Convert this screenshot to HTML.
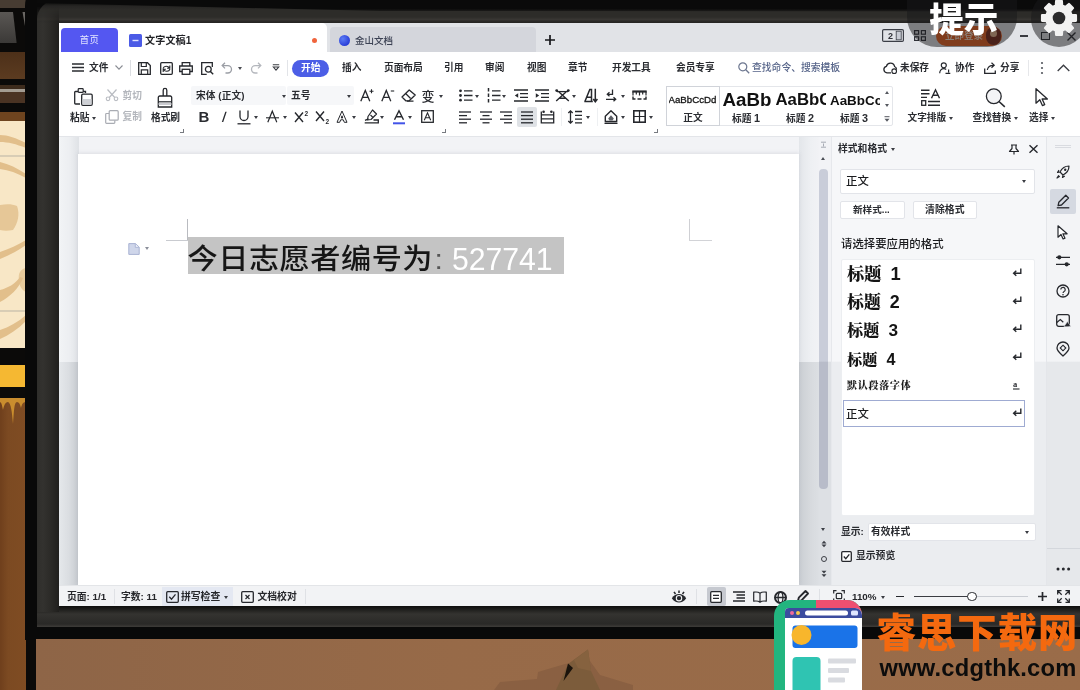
<!DOCTYPE html>
<html lang="zh-CN">
<head>
<meta charset="utf-8">
<title>文字文稿1</title>
<style>
*{box-sizing:border-box;margin:0;padding:0}
html,body{width:1080px;height:690px;overflow:hidden;background:#0b0a09}
body{font-family:"Liberation Sans","Noto Sans CJK SC",sans-serif;color:#1c1c1c;position:relative}
.abs{position:absolute}
#stage{position:absolute;left:0;top:0;width:1080px;height:690px;overflow:hidden;filter:blur(.55px)}
/* ---------- wallpaper on the left ---------- */
#wall{left:0;top:0;width:40px;height:690px;background:#0b0a09}
#wall div{position:absolute;left:0;width:26px}
/* ---------- monitor ---------- */
#bezelOuter{left:25px;top:-20px;width:1100px;height:660px;background:#090909;border-radius:26px 0 0 0}
#bezel{left:37px;top:0;width:1100px;height:627px;border-radius:20px 0 0 0;
  background:linear-gradient(180deg,#0b0b0a 0,#0f0f0e 2.500px,#262523 6px,#2d2c29 10px,#2d2c29 17px,#383633 19.500px,#262523 22px,#2c2b28 30px,#2c2b28 600px,#0e0e0d 606px,#343330 614px,#2a2927 624px,#3b3936 626.5px,#0a0a0a 627px)}
#desk{left:36px;top:639px;width:1044px;height:51px;background:#8f6647}
#screen{left:59px;top:23px;width:1021px;height:583px;background:#fff;overflow:hidden}
/* everything inside #screen is positioned in page coordinates via this shim */
#s{position:absolute;left:-59px;top:-23px;width:1080px;height:690px}
.t{position:absolute;white-space:nowrap;line-height:1}

/* ---------- tab bar ---------- */
#tabbar{left:59px;top:23px;width:1021px;height:29px;background:#e1e3e7}
#tabHome{left:61px;top:28px;width:57px;height:24px;background:#5457f1;border-radius:4px 4px 0 0;color:#e4e6ff;font-size:9.300px;text-align:center;line-height:25px;letter-spacing:.5px}
#tabDoc{left:59px;top:23px;width:268px;height:29px;background:#fff;border-radius:0 5px 0 0}
#tab2{left:330px;top:27px;width:206px;height:25px;background:#d4d6dc;border-radius:4px 4px 0 0}
.mi{font-size:9.700px;font-weight:700;color:#2a2c31;top:63px}
.ico{position:absolute;overflow:visible}
.ico *{vector-effect:none}

.rb{font-size:9.700px;font-weight:700;color:#2a2c31}
#ribbonLine{left:59px;top:136px;width:1021px;height:1px;background:#e3e5e9}
.launch{position:absolute;width:4px;height:4px;border-right:1.200px solid #777a80;border-bottom:1.200px solid #777a80}

#gal{left:666px;top:86px;width:227px;height:40px;border:1px solid #e4e6ea;border-radius:2px;background:#fff}
#galSel{left:666px;top:86px;width:54px;height:40px;border:1px solid #d0d3d9;background:#fff}
.gs{position:absolute;white-space:nowrap;overflow:hidden;font-family:"Liberation Sans","Noto Sans CJK SC",sans-serif;color:#111;line-height:1}

/* ---------- document area ---------- */
#docbg{left:59px;top:137px;width:772px;height:448px;background:linear-gradient(180deg,#f2f3f6 0,#f2f3f6 224px,#dde0e4 225.500px,#dde0e4 100%)}
#page{left:78px;top:154px;width:721px;height:431px;background:#fff;box-shadow:0 -1px 4px rgba(110,115,130,.16)}
#sel{left:188px;top:237px;width:376px;height:36.500px;background:#c4c4c4}
#doctext{left:187.500px;top:244.400px;transform:scaleY(.93);transform-origin:0 50%;font-size:30.200px;letter-spacing:.5px;color:#161616;font-family:"Liberation Sans","Noto Sans CJK SC",sans-serif;font-weight:500;line-height:32px}
#doctext .c{color:#555;margin-left:1.500px}
#doctext .n{color:#fff;margin-left:8.500px;letter-spacing:0;font-weight:400;display:inline-block;transform:scaleY(1.09);transform-origin:0 62%}
#vscroll{left:819px;top:137px;width:10px;height:448px}
#thumb{left:819px;top:169px;width:9px;height:320px;border-radius:4px;background:linear-gradient(180deg,#c9cdd9 0,#c9cdd9 192px,#b8bcc9 193.500px,#b8bcc9 100%)}

/* ---------- styles panel ---------- */
#panel{left:831px;top:137px;width:215px;height:448px;border-left:1px solid #e6e8ec;background:linear-gradient(180deg,#f6f7f9 0,#f6f7f9 224px,#ebedf0 225.500px,#ebedf0 100%)}
#tools{left:1046px;top:137px;width:34px;height:448px;border-left:1px solid #e4e6ea;background:linear-gradient(180deg,#f3f4f6 0,#f3f4f6 224px,#e6e8eb 225.500px,#e6e8eb 100%)}
.pbox{position:absolute;background:#fff;border:1px solid #e2e4e9;border-radius:2px}
.pt{font-size:9.800px;font-weight:700;color:#2a2c31}
.hd{position:absolute;white-space:nowrap;line-height:1;left:847px;font-family:"Liberation Serif","Noto Serif CJK SC",serif;font-weight:900;color:#141414}
.hd b{font-family:"Liberation Sans",sans-serif;font-weight:700;margin-left:9px;font-size:1.060em}

/* ---------- status bar ---------- */
#status{left:59px;top:585px;width:1021px;height:22px;background:#f2f3f5;border-top:1px solid #e3e5e8}
.st{font-size:9.800px;font-weight:700;color:#26272b}

/* ---------- overlay (hint / settings / watermark) ---------- */
#hint{left:907px;top:-40px;width:110px;height:86.500px;border-radius:30px;background:rgba(24,24,26,.5)}
#hintT{left:929.300px;top:2.500px;font-size:34.500px;font-weight:900;color:#fff;font-family:"Liberation Sans","Noto Sans CJK SC",sans-serif;letter-spacing:0}
#gearBg{left:1031px;top:-10px;width:56px;height:56.500px;border-radius:50%;background:rgba(24,24,26,.5)}
#wmT{left:876.500px;top:614px;letter-spacing:1.100px;font-size:39.300px;font-weight:900;color:#f4690f;font-family:"Liberation Sans","Noto Sans CJK SC",sans-serif;line-height:1}
#wmU{left:879.500px;top:656.500px;letter-spacing:.220px;font-size:23.700px;font-weight:700;color:#0c0c0c;font-family:"Liberation Sans",sans-serif;line-height:1}

.gut{position:absolute;top:137px;height:448px}
#gutL1{left:59px;width:19.500px;top:137px;height:224.500px;background:linear-gradient(90deg,#f2f4f6 0,#eceef1 55%,#dfe2e6 100%)}
#gutL2{left:59px;width:19.500px;top:361.500px;height:223.500px;background:linear-gradient(90deg,#e5e8eb 0,#dadde1 50%,#c5c9ce 100%)}
#gutR1{left:799px;width:20px;top:137px;height:224.500px;background:linear-gradient(90deg,#e3e6ea 0,#eef0f3 60%,#f1f2f5 100%)}
#gutR2{left:799px;width:20px;top:361.500px;height:223.500px;background:linear-gradient(90deg,#caced3 0,#d7dade 60%,#dcdfe3 100%)}

#bezelL{left:37px;top:6px;width:22px;height:606px;-webkit-mask-image:linear-gradient(180deg,transparent 0,#000 18px);mask-image:linear-gradient(180deg,transparent 0,#000 18px);background:linear-gradient(90deg,#2f2e2b 0,#33322f 6px,#2b2a27 14px,#201f1d 22px)}

#bezelTop{left:37px;top:0;width:1043px;height:12px;background:linear-gradient(180deg,#0a0a0a 0,#0a0a0a 72%,rgba(10,10,10,.3) 100%);clip-path:polygon(0 0,100% 0,100% 11.500px,343px 11px,40px 4px,0 3px)}
</style>
</head>
<body>
<div id="stage">
<div id="wall" class="abs">
  <div style="top:0;height:9px;background:#473c32"></div>
  <div style="top:8px;height:4px;background:#0b0a09"></div>
  <div style="top:12px;height:31px;background:linear-gradient(180deg,#5a5754,#3b3937)"></div>
  <svg style="position:absolute;left:0;top:0" width="38" height="46" viewBox="0 0 38 46"><path d="M13 12h25v34H17z" fill="#0b0a09"/><path d="M22.500 12h3l-.5 14z" fill="#6a6763"/><path d="M28 0h10v12H26z" fill="#0b0a09"/></svg>
  <div style="top:43px;height:9px;background:#0b0a09"></div>
  <div style="top:52px;height:27px;background:linear-gradient(180deg,#4d3019,#5b3b20)"></div>
  <div style="top:79px;height:6px;background:#0b0a09"></div>
  <div style="top:85px;height:4px;background:#3d2b1c"></div>
  <div style="top:89px;height:3px;background:#a39c92"></div>
  <div style="top:92px;height:11px;background:#4a3323"></div>
  <div style="top:103px;height:9px;background:#0b0a09"></div>
  <div style="top:112px;height:236px;background:#f8e7c6"></div>
  <svg style="position:absolute;left:0;top:112px" width="26" height="236" viewBox="0 112 26 236">
   <rect x="0" y="112" width="26" height="9" fill="#6e441f"/>
   <g fill="#e2bf8b">
    <path d="M0 135c8 0 16 3 26 8v5c-10-4-18-6-26-6z"/>
    <path d="M0 162c9 2 17 6 26 12v4c-9-5-17-8-26-9z"/>
    <path d="M0 205c7-1 12-1 17 1 3 8 1 17-4 24-5 1-9 1-13 0z" fill="#e6c797"/>
    <path d="M0 252c9-3 18-7 26-12v5c-8 6-17 10-26 14z"/>
    <path d="M26 268c-6 1-8 6-7 12 0 6 3 10 7 12z" fill="#e8cb9c"/>
    <path d="M0 290c8-2 15-6 20-13l3 1c-4 10-13 19-23 24z"/>
    <path d="M0 330c9-3 18-8 26-15v6c-8 8-17 14-26 18z"/>
   </g>
   <path d="M0 156h26M0 311h26" stroke="#b9b3a4" stroke-width="1"/>
  </svg>
  <div style="top:348px;height:17px;background:#0b0a09"></div>
  <div style="top:365px;height:22px;background:#f5b832"></div>
  <div style="top:387px;height:11px;background:#0b0a09"></div>
  <div style="top:398px;height:292px;background:linear-gradient(90deg,#6f3f1c 0,#7c4a22 8px,#7f4c23 100%)"></div>
  <svg style="position:absolute;left:0;top:398px" width="26" height="40" viewBox="0 0 26 40"><path d="M0 0h26v4c-3 0-4 2-5 6-1-4-2-6-4-6-3 0-3 10-4 22C12 14 11 5 8 4 5 4 4 8 3 12 2 8 2 5 0 4z" fill="#c98d2e"/></svg>
</div>
<div id="bezelOuter" class="abs"></div>
<div id="bezel" class="abs"></div>
<div id="bezelL" class="abs"></div>
<div id="bezelTop" class="abs"></div>
<div id="desk" class="abs"></div>
<svg class="ico" style="left:36px;top:639px" width="1044" height="51" viewBox="36 639 1044 51">
<defs><linearGradient id="dg" x1="0" x2="1" y1="0" y2="0"><stop offset="0" stop-color="#8e6547"/><stop offset=".4" stop-color="#976a48"/><stop offset="1" stop-color="#9a6c49"/></linearGradient></defs>
<rect x="36" y="639" width="1044" height="51" fill="url(#dg)"/>
<path d="M494 690l6-8 37-3 1-7 27-8 25-3 10 14 33 10v5z" fill="#8a6042"/>
<path d="M588 649.500L568 664l-12 26h44l-9-19z" fill="#7c5c3b"/>
<path d="M588 649.500l-14 10.500 4 8 13 3z" fill="#86623f"/>
<path d="M568 663.500l5 4.500-9.500 13z" fill="#1a130c"/>
</svg>


<div id="screen" class="abs"><div id="s">

<div id="tabbar" class="abs"></div>
<div id="tabDoc" class="abs"></div>
<div id="tabHome" class="abs">首页</div>
<div id="tab2" class="abs"></div>
<svg class="ico" style="left:129px;top:34px" width="13" height="13" viewBox="0 0 13 13"><rect width="13" height="13" rx="1.5" fill="#4b5be6"/><path d="M3.5 6.5h6" stroke="#dfe3ff" stroke-width="1.4"/></svg>
<div class="t" style="left:145px;top:36px;font-size:10.100px;font-weight:700;color:#222327;letter-spacing:.1px">文字文稿1</div>
<div class="abs" style="left:312px;top:38px;width:5px;height:5px;border-radius:50%;background:#f0643c"></div>
<div class="abs" style="left:339px;top:35px;width:11px;height:11px;border-radius:50%;background:radial-gradient(circle at 35% 35%,#5b7cf5,#2a3fd8 70%)"></div>
<div class="t" style="left:355px;top:36px;font-size:9.5px;color:#3c4254;font-weight:500">金山文档</div>
<svg class="ico" style="left:545px;top:35px" width="10" height="10" viewBox="0 0 10 10"><path d="M5 0v10M0 5h10" stroke="#17181b" stroke-width="1.7"/></svg>
<!-- window buttons -->
<svg class="ico" style="left:882px;top:29px" width="22" height="13" viewBox="0 0 22 13"><rect x=".6" y=".6" width="20.8" height="11.8" rx="1.2" fill="none" stroke="#3b3e46" stroke-width="1.2"/><rect x="14.2" y="2.2" width="5" height="8.6" fill="#c9ccd4" stroke="#3b3e46" stroke-width=".8"/><text x="6" y="10" font-size="9" font-family="Liberation Sans,sans-serif" fill="#2f3138" font-weight="bold">2</text></svg>
<svg class="ico" style="left:914px;top:30px" width="12" height="11" viewBox="0 0 12 11"><g fill="none" stroke="#2f3138" stroke-width="1.2"><rect x=".6" y=".6" width="4" height="3.6"/><rect x="7.4" y=".6" width="4" height="3.6"/><rect x=".6" y="6.8" width="4" height="3.6"/><rect x="7.4" y="6.8" width="4" height="3.6"/></g></svg>
<div class="abs" style="left:936px;top:26px;width:66px;height:20px;border-radius:10px;background:#e8601f"></div>
<div class="t" style="left:945px;top:31px;font-size:9.5px;color:#ffe9d6;font-weight:500">立即登录</div>
<div class="abs" style="left:986px;top:27px;width:15px;height:18px;border-radius:8px;background:#7a2a1a"></div>
<div class="abs" style="left:990px;top:30px;width:7px;height:7px;border-radius:50%;background:#e9b48c"></div>
<div class="abs" style="left:1020px;top:35px;width:8px;height:1.6px;background:#3a3c42"></div>
<div class="abs" style="left:1041px;top:32px;width:9px;height:8px;border:1.4px solid #2d2f35"></div>
<svg class="ico" style="left:1067px;top:32px" width="9" height="9" viewBox="0 0 9 9"><path d="M.5.5l8 8M8.5.5l-8 8" stroke="#2d2f35" stroke-width="1.4"/></svg>


<!-- hamburger -->
<svg class="ico" style="left:72px;top:63px" width="12" height="9" viewBox="0 0 12 9"><path d="M0 1h12M0 4.5h12M0 8h12" stroke="#2a2c31" stroke-width="1.3"/></svg>
<div class="t mi" style="left:89px;top:63px;">文件</div>
<svg class="ico" style="left:115px;top:65px" width="8" height="5" viewBox="0 0 8 5"><path d="M.5.5l3.5 3.7L7.500.5" fill="none" stroke="#8a8d94" stroke-width="1.1"/></svg>
<div class="abs" style="left:130px;top:60px;width:1px;height:16px;background:#dcdee2"></div>
<!-- save -->
<svg class="ico" style="left:138px;top:62px" width="13" height="13" viewBox="0 0 13 13"><path d="M.7.7h8.8l2.800 2.800v8.800H.7z" fill="none" stroke="#26282d" stroke-width="1.3"/><path d="M3.300.8v3.700h5V.8M3.300 12.200V7.800h6.400v4.400" fill="none" stroke="#26282d" stroke-width="1.200"/></svg>
<!-- save as / export -->
<svg class="ico" style="left:160px;top:62px" width="13" height="13" viewBox="0 0 13 13"><rect x=".7" y=".7" width="11.600" height="11.600" rx="1" fill="none" stroke="#26282d" stroke-width="1.3"/><path d="M3 6.500c1-3 5-3 6.500-.5M9.800 3.500v2.700H7.100M10 7c-1 3-5 3-6.500.5M3.200 10V7.300h2.700" fill="none" stroke="#26282d" stroke-width="1.100"/></svg>
<!-- print -->
<svg class="ico" style="left:179px;top:62px" width="14" height="13" viewBox="0 0 14 13"><path d="M3.200 4V.7h7.600V4M3.200 9.500H.7V4h12.600v5.500h-2.500" fill="none" stroke="#26282d" stroke-width="1.300"/><rect x="3.200" y="7.300" width="7.600" height="5" fill="#fff" stroke="#26282d" stroke-width="1.300"/></svg>
<!-- preview -->
<svg class="ico" style="left:201px;top:62px" width="13" height="13" viewBox="0 0 13 13"><path d="M11.300 5V.7H.7v11.600h5" fill="none" stroke="#26282d" stroke-width="1.300"/><circle cx="7.300" cy="7.300" r="2.900" fill="none" stroke="#26282d" stroke-width="1.300"/><path d="M9.400 9.400l2.800 2.800" stroke="#26282d" stroke-width="1.400"/></svg>
<!-- undo / redo -->
<svg class="ico" style="left:221px;top:62px" width="12" height="12" viewBox="0 0 12 12"><path d="M4 .8L1.200 3.600 4 6.400M1.500 3.600h5.300a3.700 3.700 0 010 7.400H4.500" fill="none" stroke="#9b9ea5" stroke-width="1.3"/></svg>
<div class="abs" style="left:238px;top:67px;border:2.5px solid transparent;border-top:3px solid #4a4c52"></div>
<svg class="ico" style="left:250px;top:62px" width="12" height="12" viewBox="0 0 12 12"><path d="M8 .8l2.800 2.800L8 6.400M10.500 3.600H5.200a3.700 3.700 0 000 7.400h2.300" fill="none" stroke="#b4b7bd" stroke-width="1.3"/></svg>
<svg class="ico" style="left:272px;top:64px" width="8" height="8" viewBox="0 0 8 8"><path d="M.8.800h6.400M1.300 3l2.700 3.200L6.700 3z" fill="none" stroke="#3a3c42" stroke-width="1.100"/></svg>
<div class="abs" style="left:287px;top:60px;width:1px;height:16px;background:#e2e4e8"></div>
<div class="abs" style="left:292px;top:60px;width:37px;height:17px;border-radius:9px;background:#4c5ee6"></div>
<div class="t mi" style="left:301px;top:63px;color:#fff;font-weight:700">开始</div>
<div class="t mi" style="left:342px;top:63px;">插入</div>
<div class="t mi" style="left:384px;top:63px;">页面布局</div>
<div class="t mi" style="left:444px;top:63px;">引用</div>
<div class="t mi" style="left:485px;top:63px;">审阅</div>
<div class="t mi" style="left:527px;top:63px;">视图</div>
<div class="t mi" style="left:568px;top:63px;">章节</div>
<div class="t mi" style="left:612px;top:63px;">开发工具</div>
<div class="t mi" style="left:676px;top:63px;">会员专享</div>
<svg class="ico" style="left:738px;top:62px" width="12" height="12" viewBox="0 0 12 12"><circle cx="4.800" cy="4.800" r="4" fill="none" stroke="#6d7790" stroke-width="1.200"/><path d="M7.800 7.800l3.400 3.400" stroke="#6d7790" stroke-width="1.300"/></svg>
<div class="t mi" style="left:752px;top:63px;color:#566489;font-weight:500;font-size:9.800px">查找命令、搜索模板</div>
<svg class="ico" style="left:883px;top:62px" width="15" height="12" viewBox="0 0 15 12"><path d="M8 10.800H4a3.300 3.300 0 01-.6-6.500 4.200 4.200 0 018.200.2 3 3 0 011.900 3" fill="none" stroke="#26282d" stroke-width="1.300"/><circle cx="11.200" cy="9.200" r="2.300" fill="none" stroke="#26282d" stroke-width="1.100"/></svg>
<div class="t mi" style="left:900px;top:63px;">未保存</div>
<svg class="ico" style="left:939px;top:62px" width="12" height="12" viewBox="0 0 12 12"><circle cx="4.800" cy="3.300" r="2.500" fill="none" stroke="#26282d" stroke-width="1.200"/><path d="M.7 11.300c0-3 1.800-4.600 4.100-4.600 1 0 1.800.3 2.400.8M6.500 11.300h4.800M9.600 7.500v3" fill="none" stroke="#26282d" stroke-width="1.200"/></svg>
<div class="t mi" style="left:955px;top:63px;">协作</div>
<svg class="ico" style="left:984px;top:62px" width="13" height="12" viewBox="0 0 13 12"><path d="M.7 6.500v4.800h10.600V8.500" fill="none" stroke="#26282d" stroke-width="1.300"/><path d="M3.300 8c.5-3 3-4.700 6.200-4.700M7.500.8l2.700 2.500-2.700 2.500" fill="none" stroke="#26282d" stroke-width="1.200"/></svg>
<div class="t mi" style="left:1000px;top:63px;">分享</div>
<div class="abs" style="left:1028px;top:60px;width:1px;height:16px;background:#e6e7ea"></div>
<svg class="ico" style="left:1040px;top:61px" width="4" height="14" viewBox="0 0 4 14"><circle cx="2" cy="2" r="1.100" fill="#55585f"/><circle cx="2" cy="7" r="1.100" fill="#55585f"/><circle cx="2" cy="12" r="1.100" fill="#55585f"/></svg>
<svg class="ico" style="left:1057px;top:64px" width="13" height="8" viewBox="0 0 13 8"><path d="M.7 7L6.500 1.200 12.300 7" fill="none" stroke="#3a3c42" stroke-width="1.300"/></svg>

<svg class="ico" style="left:74px;top:88px" width="19" height="18" viewBox="0 0 19 18"><path d="M9 3.500H11.500V5M4.500 3.500H1.500a.8.800 0 00-.8.800V15.200a.8.800 0 00.8.800H6" fill="none" stroke="#26282d" stroke-width="1.300"/><rect x="4.200" y=".7" width="5" height="3.600" rx=".8" fill="#fff" stroke="#26282d" stroke-width="1.200"/><rect x="7.700" y="6.200" width="10.500" height="11.100" rx="1.200" fill="#fff" stroke="#26282d" stroke-width="1.300"/><rect x="8.500" y="11" width="9" height="5.600" fill="#cfd1d6"/></svg>
<div class="t rb" style="left:70px;top:113px;">粘贴</div>
<div class="abs" style="left:92.0px;top:116.8px;border:2.5px solid transparent;border-top:3px solid #3a3c42;border-bottom:0"></div>
<svg class="ico" style="left:105px;top:89px" width="14" height="12" viewBox="0 0 14 12"><path d="M2.500.5l7.200 8M11.500.5l-7.200 8" stroke="#b9bcc2" stroke-width="1.200" fill="none"/><circle cx="3" cy="9.800" r="1.800" fill="none" stroke="#b9bcc2" stroke-width="1.100"/><circle cx="11" cy="9.800" r="1.800" fill="none" stroke="#b9bcc2" stroke-width="1.100"/></svg>
<div class="t rb" style="left:122.5px;top:90.5px;color:#b3b6bc">剪切</div>
<svg class="ico" style="left:105px;top:110px" width="14" height="14" viewBox="0 0 14 14"><rect x="4.200" y=".7" width="9" height="9.500" rx="1" fill="none" stroke="#a9acb3" stroke-width="1.200"/><path d="M4 3.500H1.500a.8.800 0 00-.8.800v8.200a.8.800 0 00.8.800H9a.8.800 0 00.8-.8V10.500" fill="none" stroke="#a9acb3" stroke-width="1.200"/></svg>
<div class="t rb" style="left:122.5px;top:112px;color:#b3b6bc">复制</div>
<svg class="ico" style="left:157px;top:88px" width="16" height="20" viewBox="0 0 16 20"><path d="M6.200 8V2.200a1.800 1.800 0 013.600 0V8M2.800 8h10.400a1.500 1.500 0 011.500 1.500V19H1.300V9.500A1.500 1.500 0 012.800 8z" fill="none" stroke="#26282d" stroke-width="1.300"/><path d="M1.500 13.800h13" stroke="#26282d" stroke-width="1.200"/><path d="M1.500 16h13" stroke="#c4c6cb" stroke-width="1.800"/></svg>
<div class="t rb" style="left:151px;top:113px;">格式刷</div>
<div class="launch" style="left:180px;top:129px"></div>
<div class="abs" style="left:191px;top:86px;width:95px;height:19px;background:#f6f7f9;border-radius:2px"></div>
<div class="abs" style="left:287px;top:86px;width:67px;height:19px;background:#f6f7f9;border-radius:2px"></div>
<div class="t rb" style="left:196px;top:91px;letter-spacing:.1px">宋体 (正文)</div>
<div class="abs" style="left:281.5px;top:94.8px;border:2.5px solid transparent;border-top:3px solid #3a3c42;border-bottom:0"></div>
<div class="t rb" style="left:291px;top:91px;">五号</div>
<div class="abs" style="left:346.5px;top:94.8px;border:2.5px solid transparent;border-top:3px solid #3a3c42;border-bottom:0"></div>
<svg class="ico" style="left:360px;top:89px" width="14" height="13" viewBox="0 0 14 13"><path d="M.8 12.300L5.300 1.500 9.800 12.300M2.600 8.300h5.400" fill="none" stroke="#26282d" stroke-width="1.300"/><path d="M11.500.3v4M9.500 2.300h4" stroke="#26282d" stroke-width="1.100"/></svg>
<svg class="ico" style="left:381px;top:89px" width="14" height="13" viewBox="0 0 14 13"><path d="M.8 12.300L5.300 1.500 9.800 12.300M2.600 8.300h5.400" fill="none" stroke="#26282d" stroke-width="1.300"/><path d="M9.800 2h3.400" stroke="#26282d" stroke-width="1.100"/></svg>
<svg class="ico" style="left:401px;top:89px" width="15" height="13" viewBox="0 0 15 13"><path d="M8.200 1L1 8l3.800 3.800h3.400L14.200 6z" fill="none" stroke="#26282d" stroke-width="1.300" stroke-linejoin="round"/><path d="M4.600 4.500l5 5M6 12.200h6.500" stroke="#26282d" stroke-width="1.200" fill="none"/></svg>
<div class="t rb" style="left:421.5px;top:90px;font-size:13px;font-weight:500">变</div>
<div class="abs" style="left:438.5px;top:94.8px;border:2.5px solid transparent;border-top:3px solid #3a3c42;border-bottom:0"></div>
<svg class="ico" style="left:459px;top:89px" width="14" height="13" viewBox="0 0 14 13"><g fill="#26282d"><circle cx="1.500" cy="1.800" r="1.400"/><circle cx="1.500" cy="6.500" r="1.400"/><circle cx="1.500" cy="11.200" r="1.400"/></g><path d="M5 1.800h8.500M5 6.500h8.500M5 11.200h8.500" stroke="#26282d" stroke-width="1.300"/></svg>
<div class="abs" style="left:474.5px;top:94.8px;border:2.5px solid transparent;border-top:3px solid #3a3c42;border-bottom:0"></div>
<svg class="ico" style="left:487px;top:88px" width="14" height="15" viewBox="0 0 14 15"><path d="M1.500 0v15" stroke="#26282d" stroke-width="1.500" stroke-dasharray="3.500 2"/><path d="M5 2.800h8.500M5 7.500h8.500M5 12.200h8.500" stroke="#26282d" stroke-width="1.300"/></svg>
<div class="abs" style="left:502.0px;top:94.8px;border:2.5px solid transparent;border-top:3px solid #3a3c42;border-bottom:0"></div>
<svg class="ico" style="left:514px;top:89px" width="14" height="13" viewBox="0 0 14 13"><path d="M0 1h14M6 4.700h8M6 8.300h8M0 12h14" stroke="#26282d" stroke-width="1.300"/><path d="M4.200 4.200v4.600L.8 6.500z" fill="#26282d"/></svg>
<svg class="ico" style="left:535px;top:89px" width="14" height="13" viewBox="0 0 14 13"><path d="M0 1h14M6 4.700h8M6 8.300h8M0 12h14" stroke="#26282d" stroke-width="1.300"/><path d="M.8 4.200v4.600l3.400-2.300z" fill="#26282d"/></svg>
<svg class="ico" style="left:555px;top:88px" width="15" height="14" viewBox="0 0 15 14"><path d="M2 3.600h11" stroke="#26282d" stroke-width="1.300"/><path d="M4 4l9.800 9M11 4L1.200 13M4.500 10.300h6" stroke="#26282d" stroke-width="1.400" fill="none"/><circle cx="1.700" cy="2.600" r="1.400" fill="#26282d"/><circle cx="13.300" cy="2.600" r="1.400" fill="#26282d"/></svg>
<div class="abs" style="left:572.0px;top:94.8px;border:2.5px solid transparent;border-top:3px solid #3a3c42;border-bottom:0"></div>
<svg class="ico" style="left:584px;top:88px" width="14" height="15" viewBox="0 0 14 15"><path d="M1 13.300L5.800 1.500l1.700 0v11.800M2.800 9.300h4.500M.3 13.500h8.500" fill="none" stroke="#26282d" stroke-width="1.500"/><path d="M11.300.800v12.600M9.200 11l2.100 2.800 2.100-2.800" fill="none" stroke="#26282d" stroke-width="1.500"/></svg>
<svg class="ico" style="left:605px;top:89px" width="13" height="13" viewBox="0 0 13 13"><path d="M7.500.5v4.800H2.500M4.500 3.300L2.300 5.300l2.200 2M1 10.300h9.500M8.500 8.300l2.200 2-2.200 2" fill="none" stroke="#26282d" stroke-width="1.300"/></svg>
<div class="abs" style="left:620.5px;top:94.8px;border:2.5px solid transparent;border-top:3px solid #3a3c42;border-bottom:0"></div>
<svg class="ico" style="left:632px;top:90px" width="15" height="11" viewBox="0 0 15 11"><path d="M.3 1.500h14.400" stroke="#26282d" stroke-width="2.200"/><path d="M1 1.500v4M4.300 1.500v3M7.500 1.500v4M10.700 1.500v3M14 1.500v4" stroke="#26282d" stroke-width="1.200"/><path d="M1 6.500v2.500h2.500M14 6.500v2.500h-2.500M5.500 9h4" stroke="#26282d" stroke-width="1.400" fill="none"/></svg>
<div class="t rb" style="left:198.5px;top:109px;font-size:15px;font-weight:700;font-family:Liberation Sans,sans-serif">B</div>
<div class="t rb" style="left:221.5px;top:109px;font-size:15px;font-style:italic;font-weight:400;font-family:Liberation Sans,sans-serif;transform:skewX(-8deg)">I</div>
<svg class="ico" style="left:237px;top:110px" width="14" height="15" viewBox="0 0 14 15"><path d="M3 .5v6a4 4 0 008 0v-6" fill="none" stroke="#26282d" stroke-width="1.300"/><path d="M.5 13.800h13" stroke="#26282d" stroke-width="1.300"/></svg>
<div class="abs" style="left:254.0px;top:115.8px;border:2.5px solid transparent;border-top:3px solid #3a3c42;border-bottom:0"></div>
<svg class="ico" style="left:266px;top:110px" width="13" height="13" viewBox="0 0 13 13"><path d="M1.800 12.300L6.300 1.200l4.500 11.100" fill="none" stroke="#26282d" stroke-width="1.200"/><path d="M0 7.800h13" stroke="#26282d" stroke-width="1.100"/></svg>
<div class="abs" style="left:282.5px;top:115.8px;border:2.5px solid transparent;border-top:3px solid #3a3c42;border-bottom:0"></div>
<svg class="ico" style="left:294px;top:110px" width="15" height="13" viewBox="0 0 15 13"><path d="M1 2.500l8 9.500M9 2.500l-8 9.500" stroke="#26282d" stroke-width="1.400"/><text x="10.500" y="6" font-size="6.500" font-weight="bold" font-family="Liberation Sans,sans-serif" fill="#26282d">2</text></svg>
<svg class="ico" style="left:315px;top:110px" width="15" height="14" viewBox="0 0 15 14"><path d="M1 1.500l8 9.500M9 1.500l-8 9.500" stroke="#26282d" stroke-width="1.400"/><text x="10.500" y="13.500" font-size="6.500" font-weight="bold" font-family="Liberation Sans,sans-serif" fill="#26282d">2</text></svg>
<svg class="ico" style="left:336px;top:110px" width="12" height="13" viewBox="0 0 12 13"><path d="M1 12.300L6 1l5 11.300H8.300L7.300 9.800H4.700l-1 2.500zM5.300 8h1.400L6 5.800z" fill="#fff" stroke="#26282d" stroke-width="1" stroke-linejoin="round"/></svg>
<div class="abs" style="left:351.5px;top:115.8px;border:2.5px solid transparent;border-top:3px solid #3a3c42;border-bottom:0"></div>
<svg class="ico" style="left:364px;top:109px" width="15" height="15" viewBox="0 0 15 15"><path d="M8.500 1l4 4-5.500 5.500-3.500.5.500-3.500z" fill="none" stroke="#26282d" stroke-width="1.200" stroke-linejoin="round"/><path d="M6.500 6l2.500 2.500" stroke="#26282d" stroke-width="1.100"/><path d="M1 11.300l3.500-1.500M.7 13.800h13.600V11H9.500" fill="none" stroke="#26282d" stroke-width="1.300"/></svg>
<div class="abs" style="left:379.5px;top:115.8px;border:2.5px solid transparent;border-top:3px solid #3a3c42;border-bottom:0"></div>
<svg class="ico" style="left:393px;top:110px" width="12" height="15" viewBox="0 0 12 15"><path d="M1.500 9.800L6 .8l4.500 9M3 6.800h6" fill="none" stroke="#26282d" stroke-width="1.400"/><path d="M0 13.300h12" stroke="#4253e8" stroke-width="2"/></svg>
<div class="abs" style="left:408.0px;top:115.8px;border:2.5px solid transparent;border-top:3px solid #3a3c42;border-bottom:0"></div>
<svg class="ico" style="left:420.5px;top:110px" width="13" height="13" viewBox="0 0 13 13"><rect x=".7" y=".7" width="11.600" height="11.600" fill="none" stroke="#26282d" stroke-width="1.300"/><path d="M3.300 10.300L6.500 2.800l3.200 7.500M4.400 7.800h4.200" fill="none" stroke="#26282d" stroke-width="1.100"/></svg>
<svg class="ico" style="left:459px;top:111px" width="13" height="13" viewBox="0 0 13 13"><path d="M0 1.0h12" stroke="#26282d" stroke-width="1.300"/><path d="M0 4.6h8" stroke="#26282d" stroke-width="1.300"/><path d="M0 8.2h12" stroke="#26282d" stroke-width="1.300"/><path d="M0 11.8h8" stroke="#26282d" stroke-width="1.300"/></svg>
<svg class="ico" style="left:480px;top:111px" width="13" height="13" viewBox="0 0 13 13"><path d="M0 1.0h12" stroke="#26282d" stroke-width="1.300"/><path d="M2.5 4.6h7" stroke="#26282d" stroke-width="1.300"/><path d="M0 8.2h12" stroke="#26282d" stroke-width="1.300"/><path d="M2.5 11.8h7" stroke="#26282d" stroke-width="1.300"/></svg>
<svg class="ico" style="left:500px;top:111px" width="13" height="13" viewBox="0 0 13 13"><path d="M0 1.0h12" stroke="#26282d" stroke-width="1.300"/><path d="M4 4.6h8" stroke="#26282d" stroke-width="1.300"/><path d="M0 8.2h12" stroke="#26282d" stroke-width="1.300"/><path d="M4 11.8h8" stroke="#26282d" stroke-width="1.300"/></svg>
<div class="abs" style="left:517px;top:107px;width:20px;height:20px;background:#dfe2e6;border-radius:2px"></div>
<svg class="ico" style="left:521px;top:111px" width="13" height="13" viewBox="0 0 13 13"><path d="M0 1.0h12" stroke="#26282d" stroke-width="1.300"/><path d="M0 4.6h12" stroke="#26282d" stroke-width="1.300"/><path d="M0 8.2h12" stroke="#26282d" stroke-width="1.300"/><path d="M0 11.8h12" stroke="#26282d" stroke-width="1.300"/></svg>
<svg class="ico" style="left:540px;top:110px" width="15" height="14" viewBox="0 0 15 14"><path d="M1.300 1.500v12M13.700 1.500v12M1.300 4.800h12.400M1.300 8.800h12.400M1.300 12.800h12.400" fill="none" stroke="#26282d" stroke-width="1.300"/><circle cx="3.600" cy="1.800" r="1.300" fill="#26282d"/><circle cx="11.400" cy="1.800" r="1.300" fill="#26282d"/></svg>
<div class="abs" style="left:561px;top:108px;width:1px;height:18px;background:#eef0f2"></div>
<svg class="ico" style="left:568px;top:110px" width="14" height="14" viewBox="0 0 14 14"><path d="M2.500.8v12.400M.3 3L2.500.8 4.700 3M.3 11l2.200 2.200L4.700 11" fill="none" stroke="#26282d" stroke-width="1.300"/><path d="M7 1.500h7M7 5.300h7M7 9.100h7M7 12.900h7" stroke="#26282d" stroke-width="1.300"/></svg>
<div class="abs" style="left:586.0px;top:115.8px;border:2.5px solid transparent;border-top:3px solid #3a3c42;border-bottom:0"></div>
<div class="abs" style="left:597px;top:108px;width:1px;height:18px;background:#eef0f2"></div>
<svg class="ico" style="left:604px;top:110px" width="14" height="14" viewBox="0 0 14 14"><path d="M7 .800l5.700 5.400v5.300H1.300V6.200z" fill="none" stroke="#26282d" stroke-width="1.400" stroke-linejoin="round"/><path d="M4.200 8.500l2.800-3.300 2.800 3.300-1.300 2H5.500z" fill="#5a5d64"/><path d="M.5 13.300h13" stroke="#26282d" stroke-width="1.400"/></svg>
<div class="abs" style="left:620.5px;top:115.8px;border:2.5px solid transparent;border-top:3px solid #3a3c42;border-bottom:0"></div>
<svg class="ico" style="left:632.5px;top:110px" width="13" height="13" viewBox="0 0 13 13"><rect x=".800" y=".800" width="11.400" height="11.400" fill="none" stroke="#26282d" stroke-width="1.600"/><path d="M6.500.800v11.400M.800 6.500h11.400" stroke="#26282d" stroke-width="1.200"/></svg>
<div class="abs" style="left:648.5px;top:115.8px;border:2.5px solid transparent;border-top:3px solid #3a3c42;border-bottom:0"></div>
<div class="launch" style="left:654px;top:129px"></div>
<div class="launch" style="left:442px;top:129px"></div>
<div id="ribbonLine" class="abs"></div>
<div id="gal" class="abs"></div><div id="galSel" class="abs"></div>
<div class="gs" style="left:668.500px;top:94.500px;font-size:9.700px;color:#141414;-webkit-text-stroke:.300px #141414">AaBbCcDd</div>
<div class="gs" style="left:722.500px;top:90.500px;font-size:18.700px;font-weight:700;height:20px">AaBb</div>
<div class="gs" style="left:775.500px;top:92px;font-size:16.800px;font-weight:700;width:50px;height:19px">AaBbCc</div>
<div class="gs" style="left:830px;top:94px;font-size:13.400px;font-weight:700;width:49.500px;height:16px">AaBbCcD</div>
<div class="t rb" style="left:653px;width:80px;text-align:center;top:113px;">正文</div>
<div class="t rb" style="left:706px;width:80px;text-align:center;top:113px;">标题 <span style="font-size:10.800px">1</span></div>
<div class="t rb" style="left:760px;width:80px;text-align:center;top:113px;">标题 <span style="font-size:10.800px">2</span></div>
<div class="t rb" style="left:814px;width:80px;text-align:center;top:113px;">标题 <span style="font-size:10.800px">3</span></div>
<div class="abs" style="left:884.500px;top:90.500px;border:2.500px solid transparent;border-bottom:3px solid #55585f;border-top:0"></div>
<div class="abs" style="left:884.5px;top:104.3px;border:2.5px solid transparent;border-top:3px solid #55585f;border-bottom:0"></div>
<svg class="ico" style="left:884px;top:116px" width="6" height="7" viewBox="0 0 6 7"><path d="M.5.700h5" stroke="#55585f" stroke-width="1"/><path d="M.5 2.800L3 5.800l2.500-3z" fill="#55585f"/></svg>
<svg class="ico" style="left:921px;top:89px" width="19" height="18" viewBox="0 0 19 18"><path d="M0 1.200h8.500M0 4.800h8.500M0 8.400h6M7 12.500h12M7 16.300h12" stroke="#26282d" stroke-width="1.400"/><rect x=".7" y="11.700" width="4" height="4.600" fill="none" stroke="#26282d" stroke-width="1.300"/><path d="M10.500 9.300L14.500.8l4 8.500M11.800 6.300h5.400" fill="none" stroke="#26282d" stroke-width="1.400"/></svg>
<div class="t rb" style="left:907.5px;top:113px;">文字排版</div>
<div class="abs" style="left:949.0px;top:116.8px;border:2.5px solid transparent;border-top:3px solid #3a3c42;border-bottom:0"></div>
<svg class="ico" style="left:985px;top:88px" width="21" height="20" viewBox="0 0 21 20"><circle cx="8.800" cy="8.300" r="7.400" fill="#f4f4f6" stroke="#26282d" stroke-width="1.300"/><path d="M14 13.500l5.800 5.300" stroke="#26282d" stroke-width="1.600"/></svg>
<div class="t rb" style="left:972.5px;top:113px;">查找替换</div>
<div class="abs" style="left:1014.0px;top:116.8px;border:2.5px solid transparent;border-top:3px solid #3a3c42;border-bottom:0"></div>
<svg class="ico" style="left:1035px;top:88px" width="14" height="19" viewBox="0 0 14 19"><path d="M1 .8v14.400l3.800-3.400 2.600 5.800 2.300-1-2.600-5.600h5.300z" fill="#fff" stroke="#26282d" stroke-width="1.300" stroke-linejoin="round"/></svg>
<div class="t rb" style="left:1029px;top:113px;">选择</div>
<div class="abs" style="left:1050.5px;top:116.8px;border:2.5px solid transparent;border-top:3px solid #3a3c42;border-bottom:0"></div>

<div id="docbg" class="abs"></div>
<div id="gutL1" class="abs"></div><div id="gutL2" class="abs"></div><div id="gutR1" class="abs"></div><div id="gutR2" class="abs"></div>
<div id="page" class="abs"></div>
<div class="abs" style="left:187px;top:219px;width:1px;height:21px;background:#b9bbc0"></div>
<div class="abs" style="left:166px;top:240px;width:22px;height:1px;background:#c9cbd0"></div>
<div class="abs" style="left:689px;top:219px;width:1px;height:21px;background:#cfd0d4"></div>
<div class="abs" style="left:689px;top:240px;width:23px;height:1px;background:#d2d3d7"></div>
<div id="sel" class="abs"></div>
<div id="doctext" class="t">今日志愿者编号为<span class="c">:</span><span class="n">527741</span></div>
<svg class="ico" style="left:128px;top:242.5px" width="12" height="12" viewBox="0 0 12 12"><path d="M.8.600h6.700l3.700 3.500v7.300H.8z" fill="#cfd6ea" stroke="#a9b3d3" stroke-width="1"/><path d="M7.300.800v3.600h3.700" fill="#eef1fa" stroke="#a9b3d3" stroke-width=".9"/></svg>
<div class="abs" style="left:144.5px;top:247.3px;border:2.5px solid transparent;border-top:3px solid #8b8f9a;border-bottom:0"></div>
<div id="thumb" class="abs"></div>
<svg class="ico" style="left:820px;top:141px" width="7" height="7" viewBox="0 0 7 7"><path d="M1 1.200h5M3.500 2.500v3M1 6.200h5" stroke="#9da1ab" stroke-width=".9"/></svg>
<div class="abs" style="left:820.500px;top:157px;border:2.500px solid transparent;border-bottom:3px solid #4b4e55;border-top:0"></div>
<div class="abs" style="left:821.0px;top:528.3px;border:2.5px solid transparent;border-top:3px solid #3c3f46;border-bottom:0"></div>
<svg class="ico" style="left:821px;top:540px" width="6" height="8" viewBox="0 0 6 8"><path d="M.5 3.500L3 .8l2.500 2.700zM.5 4.500L3 7.200l2.500-2.700z" fill="#3c3f46"/></svg>
<div class="abs" style="left:821px;top:556px;width:6px;height:6px;border:1.100px solid #3c3f46;border-radius:50%"></div>
<svg class="ico" style="left:821px;top:570px" width="6" height="8" viewBox="0 0 6 8"><path d="M.5.800L3 3.500 5.500.8zM.5 4.300L3 7 5.500 4.300z" fill="#3c3f46"/></svg>

<div id="panel" class="abs"></div><div id="tools" class="abs"></div>
<div class="t pt" style="left:838px;top:144px;">样式和格式</div>
<div class="abs" style="left:890.5px;top:148.3px;border:2.5px solid transparent;border-top:3px solid #3a3c42;border-bottom:0"></div>
<svg class="ico" style="left:1008px;top:144px" width="12" height="11" viewBox="0 0 12 11"><path d="M3 1h6M4 1v3.500L1.500 7.500h9L8 4.500V1M6 7.500v3" fill="none" stroke="#26282d" stroke-width="1.200" stroke-linejoin="round"/></svg>
<svg class="ico" style="left:1029px;top:145px" width="9" height="8" viewBox="0 0 9 8"><path d="M.5.300l8 7.400M8.500.300l-8 7.400" stroke="#26282d" stroke-width="1.400"/></svg>
<div class="pbox" style="left:840px;top:169px;width:195px;height:25px"></div>
<div class="t pt" style="left:846px;top:176px;font-size:11.400px;font-weight:500;color:#1b1c1f">正文</div>
<div class="abs" style="left:1022.0px;top:179.8px;border:2.5px solid transparent;border-top:3px solid #3a3c42;border-bottom:0"></div>
<div class="pbox" style="left:840px;top:200.500px;width:65px;height:18px"></div>
<div class="pbox" style="left:913px;top:200.500px;width:64px;height:18px"></div>
<div class="t pt" style="left:853px;top:205px;font-size:9.600px">新样式...</div>
<div class="t pt" style="left:925px;top:205px;font-size:9.900px">清除格式</div>
<div class="t pt" style="left:841px;top:239px;font-size:11.400px;font-weight:500;color:#1b1c1f">请选择要应用的格式</div>
<div class="pbox" style="left:841px;top:259px;width:194px;height:257px;border-color:#eceef1"></div>
<div class="hd" style="top:265px;font-size:17.3px">标题<b>1</b></div>
<div class="hd" style="top:293.5px;font-size:16.9px">标题<b>2</b></div>
<div class="hd" style="top:322px;font-size:16.2px">标题<b>3</b></div>
<div class="hd" style="top:350.5px;font-size:15.2px">标题<b>4</b></div>
<svg class="ico" style="left:1011.5px;top:267.5px" width="10" height="8" viewBox="0 0 10 8"><path d="M8.800.500v4.700H2M4.300 2.700L1.600 5.200l2.700 2.500" fill="none" stroke="#26282d" stroke-width="1.400"/></svg>
<svg class="ico" style="left:1011.5px;top:295.5px" width="10" height="8" viewBox="0 0 10 8"><path d="M8.800.500v4.700H2M4.300 2.700L1.600 5.200l2.700 2.500" fill="none" stroke="#26282d" stroke-width="1.400"/></svg>
<svg class="ico" style="left:1011.5px;top:323.5px" width="10" height="8" viewBox="0 0 10 8"><path d="M8.800.500v4.700H2M4.300 2.700L1.600 5.200l2.700 2.500" fill="none" stroke="#26282d" stroke-width="1.400"/></svg>
<svg class="ico" style="left:1011.5px;top:351.5px" width="10" height="8" viewBox="0 0 10 8"><path d="M8.800.500v4.700H2M4.300 2.700L1.600 5.200l2.700 2.500" fill="none" stroke="#26282d" stroke-width="1.400"/></svg>
<div class="t" style="left:847px;top:380.500px;font-size:10px;letter-spacing:.750px;font-family:'Liberation Serif','Noto Serif CJK SC',serif;font-weight:900;color:#1c1c1c">默认段落字体</div>
<svg class="ico" style="left:1013px;top:380px" width="7" height="10" viewBox="0 0 7 10"><text x="0" y="7" font-size="8.500" font-weight="bold" font-family="Liberation Serif,serif" fill="#26282d">a</text><path d="M0 9h6.500" stroke="#26282d" stroke-width="1.100"/></svg>
<div class="abs" style="left:842.500px;top:399.500px;width:182px;height:27px;border:1px solid #9fabd2;background:#fff"></div>
<div class="t pt" style="left:846px;top:408.5px;font-size:11.400px;font-weight:500;color:#1b1c1f">正文</div>
<svg class="ico" style="left:1011.5px;top:407.5px" width="10" height="8" viewBox="0 0 10 8"><path d="M8.800.500v4.700H2M4.300 2.700L1.600 5.200l2.700 2.500" fill="none" stroke="#26282d" stroke-width="1.400"/></svg>
<div class="t pt" style="left:841px;top:527px;">显示:</div>
<div class="pbox" style="left:867.500px;top:523px;width:168px;height:17.500px"></div>
<div class="t pt" style="left:871px;top:527px;">有效样式</div>
<div class="abs" style="left:1025.0px;top:530.8px;border:2.5px solid transparent;border-top:3px solid #3a3c42;border-bottom:0"></div>
<svg class="ico" style="left:841px;top:551px" width="11" height="11" viewBox="0 0 11 11"><rect x=".700" y=".700" width="9.600" height="9.600" rx="1" fill="#fff" stroke="#26282d" stroke-width="1.300"/><path d="M2.800 5.500l2 2.200 3.500-4.400" fill="none" stroke="#26282d" stroke-width="1.300"/></svg>
<div class="t pt" style="left:856px;top:551px;">显示预览</div>
<div class="abs" style="left:1055px;top:145px;width:16px;height:3px;border-top:1px solid #d9dbe0;border-bottom:1px solid #d9dbe0"></div>
<svg class="ico" style="left:1056px;top:165px" width="14" height="14" viewBox="0 0 14 14"><path d="M13 1c-4 0-7 2-9 6l3 3c4-2 6-5 6-9zM4.300 7L1.500 7.500 3 5.200M7 9.700l-.5 2.800 2.300-1.500M2.800 10.200L1 13l2.800-1.800" fill="none" stroke="#26282d" stroke-width="1.200" stroke-linejoin="round"/><circle cx="9.200" cy="4.800" r="1.200" fill="#26282d"/></svg>
<div class="abs" style="left:1049.500px;top:189px;width:26.500px;height:25px;background:#d5d9e1;border-radius:2px"></div>
<svg class="ico" style="left:1056px;top:194px" width="14" height="15" viewBox="0 0 14 15"><path d="M9.800 1.300l2.700 2.700-7 7-3.400.700.700-3.400z" fill="none" stroke="#26282d" stroke-width="1.300" stroke-linejoin="round"/><path d="M.800 13.800h12.500" stroke="#26282d" stroke-width="1.300"/></svg>
<svg class="ico" style="left:1057px;top:225px" width="12" height="15" viewBox="0 0 12 15"><path d="M1 .800v11.400l3-2.700 2.100 4.500 1.900-.800-2.100-4.400h4.200z" fill="#fff" stroke="#26282d" stroke-width="1.200" stroke-linejoin="round"/></svg>
<svg class="ico" style="left:1056px;top:254px" width="14" height="14" viewBox="0 0 14 14"><path d="M0 3.300h14M0 10.300h14" stroke="#26282d" stroke-width="1.200"/><circle cx="3.300" cy="3.300" r="2.100" fill="#26282d"/><circle cx="10.700" cy="10.300" r="2.100" fill="#26282d"/></svg>
<svg class="ico" style="left:1056px;top:284px" width="14" height="14" viewBox="0 0 14 14"><circle cx="7" cy="7" r="6" fill="none" stroke="#26282d" stroke-width="1.300"/><path d="M4.800 5.500a2.200 2.200 0 114 1.300c-.8.800-1.600 1.200-1.800 2.200" fill="none" stroke="#26282d" stroke-width="1.200"/><circle cx="7" cy="10.800" r=".800" fill="#26282d"/></svg>
<svg class="ico" style="left:1056px;top:314px" width="15" height="14" viewBox="0 0 15 14"><rect x=".700" y=".700" width="12.600" height="11.600" rx="2" fill="none" stroke="#26282d" stroke-width="1.300"/><path d="M.800 8.500l3.500-3 3 2.800" fill="none" stroke="#26282d" stroke-width="1.200"/><path d="M8 12.500l3.500-5 3.300 5z" fill="#26282d" stroke="#e1e3e7" stroke-width=".600"/></svg>
<svg class="ico" style="left:1056px;top:342px" width="14" height="15" viewBox="0 0 14 15"><path d="M7 14C3 10.500 1 8.500 1 6a6 6 0 0112 0c0 2.500-2 4.500-6 8z" fill="none" stroke="#26282d" stroke-width="1.300"/><path d="M7 3.200L9.800 6 7 8.800 4.200 6z" fill="none" stroke="#26282d" stroke-width="1.100"/></svg>
<div class="abs" style="left:1047px;top:548px;width:33px;height:1px;background:#d4d7dc"></div>
<svg class="ico" style="left:1056px;top:567px" width="15" height="4" viewBox="0 0 15 4"><circle cx="2" cy="2" r="1.500" fill="#26282d"/><circle cx="7.300" cy="2" r="1.500" fill="#26282d"/><circle cx="12.600" cy="2" r="1.500" fill="#26282d"/></svg>

<div id="status" class="abs"></div>
<div class="t st" style="left:67px;top:592px;">页面: 1/1</div>
<div class="abs" style="left:113.500px;top:589px;width:1px;height:15px;background:#dfe1e5"></div>
<div class="t st" style="left:121px;top:592px;">字数: 11</div>
<div class="abs" style="left:162px;top:587px;width:71px;height:19px;background:#e4e8f2"></div>
<svg class="ico" style="left:165.5px;top:590.5px" width="13" height="12" viewBox="0 0 13 12"><rect x=".700" y=".700" width="11.600" height="10.600" rx="1" fill="none" stroke="#26282d" stroke-width="1.300"/><path d="M3.300 5.800l2.200 2.400 4-4.800" fill="none" stroke="#26282d" stroke-width="1.300"/></svg>
<div class="t st" style="left:181px;top:592px;">拼写检查</div>
<div class="abs" style="left:224.0px;top:596.3px;border:2.5px solid transparent;border-top:3px solid #3a3c42;border-bottom:0"></div>
<svg class="ico" style="left:240.5px;top:590.5px" width="13" height="12" viewBox="0 0 13 12"><rect x=".700" y=".700" width="11.600" height="10.600" rx="1" fill="none" stroke="#26282d" stroke-width="1.300"/><path d="M4.500 4l4 4M8.500 4l-4 4" fill="none" stroke="#26282d" stroke-width="1.200"/></svg>
<div class="t st" style="left:257.5px;top:592px;">文档校对</div>
<div class="abs" style="left:305px;top:589px;width:1px;height:15px;background:#dfe1e5"></div>
<svg class="ico" style="left:671px;top:590px" width="16" height="14" viewBox="0 0 16 14"><path d="M.8 8.300c2-3 4.500-4.300 7.200-4.300s5.200 1.300 7.200 4.300c-2 2.900-4.500 4.200-7.200 4.200S2.800 11.200.8 8.300z" fill="#26282d"/><circle cx="8" cy="8.200" r="2.700" fill="none" stroke="#f2f3f5" stroke-width="1.100"/><path d="M3 1.800l1.500 2.200M8 .500v2.500M13 1.800l-1.500 2.200" stroke="#26282d" stroke-width="1.500"/></svg>
<div class="abs" style="left:706.500px;top:587px;width:19px;height:19px;background:#c6c9d0;border-radius:2px"></div>
<svg class="ico" style="left:710px;top:590.5px" width="12" height="12" viewBox="0 0 12 12"><rect x=".700" y=".700" width="10.600" height="10.600" rx="1" fill="#fff" stroke="#26282d" stroke-width="1.300"/><path d="M3 4.300h6M3 7.300h6" stroke="#26282d" stroke-width="1.300"/></svg>
<svg class="ico" style="left:732.5px;top:591px" width="12" height="11" viewBox="0 0 12 11"><path d="M0 1h12M3.500 4h8.500M3.500 7h8.500M0 10h12" stroke="#26282d" stroke-width="1.300"/></svg>
<svg class="ico" style="left:752.5px;top:590.5px" width="14" height="12" viewBox="0 0 14 12"><path d="M7 2.200v9M7 2.200C5.500 1 3 .800.700 1.200v9C3 9.800 5.500 10 7 11.200 8.500 10 11 9.800 13.300 10.200v-9C11 .800 8.500 1 7 2.200z" fill="none" stroke="#26282d" stroke-width="1.200" stroke-linejoin="round"/></svg>
<svg class="ico" style="left:774px;top:590.5px" width="13" height="13" viewBox="0 0 13 13"><circle cx="6.500" cy="6.500" r="5.500" fill="none" stroke="#26282d" stroke-width="2"/><ellipse cx="6.500" cy="6.500" rx="2.400" ry="5.500" fill="none" stroke="#26282d" stroke-width="1.300"/><path d="M1 6.500h11" stroke="#26282d" stroke-width="1.500"/></svg>
<svg class="ico" style="left:795px;top:590px" width="14" height="14" viewBox="0 0 14 14"><path d="M10.500 1l2.500 2.500-6.500 6.800-3.600 1 .9-3.600z" fill="none" stroke="#26282d" stroke-width="1.900" stroke-linejoin="round"/><path d="M.800 13.200c1.500-.900 2.800-.900 4.300 0" fill="none" stroke="#26282d" stroke-width="1.400"/></svg>
<div class="abs" style="left:819px;top:589px;width:1px;height:15px;background:#dfe1e5"></div>
<div class="abs" style="left:695.500px;top:589px;width:1px;height:15px;background:#dfe1e5"></div>
<svg class="ico" style="left:833px;top:590px" width="12" height="12" viewBox="0 0 12 12"><path d="M.700 3.500V.700h2.800M8.500.700h2.800v2.800M11.300 8.500v2.800H8.500M3.500 11.300H.700V8.500" fill="none" stroke="#26282d" stroke-width="1.200"/><rect x="3.300" y="3.300" width="5.400" height="5.400" rx="1" fill="none" stroke="#26282d" stroke-width="1.200"/></svg>
<div class="t st" style="left:852px;top:592px;">110%</div>
<div class="abs" style="left:881.0px;top:596.3px;border:2.5px solid transparent;border-top:3px solid #3a3c42;border-bottom:0"></div>
<div class="abs" style="left:896px;top:595.500px;width:8px;height:1.600px;background:#26282d"></div>
<div class="abs" style="left:914px;top:595.800px;width:54px;height:1.200px;background:#3a3c42"></div>
<div class="abs" style="left:976px;top:595.800px;width:52px;height:1.200px;background:#c9ccd2"></div>
<div class="abs" style="left:967px;top:591.500px;width:9.500px;height:9.500px;border:1.400px solid #26282d;border-radius:50%;background:#fff"></div>
<svg class="ico" style="left:1037.5px;top:592px" width="9" height="9" viewBox="0 0 9 9"><path d="M4.500 0v9M0 4.500h9" stroke="#26282d" stroke-width="1.700"/></svg>
<svg class="ico" style="left:1057px;top:590px" width="13" height="13" viewBox="0 0 13 13"><path d="M.700 4.500V.700h3.800M.900.900l3.800 3.800M8.500.700h3.800v3.800M12.100.900L8.300 4.700M12.300 8.500v3.800H8.500M12.100 12.100L8.300 8.300M4.500 12.300H.700V8.500M.900 12.100l3.800-3.800" fill="none" stroke="#26282d" stroke-width="1.300"/></svg>

</div></div>

<div id="hint" class="abs"></div>
<div id="hintT" class="t">提示</div>
<div id="gearBg" class="abs"></div>
<svg class="ico" style="left:1039px;top:-2px" width="40" height="40" viewBox="-20 -20 40 40"><path transform="scale(.95)" d="M13.10 -3.25 L17.76 -2.96 L17.76 2.96 L13.10 3.25 L11.57 6.96 L14.64 10.47 L10.47 14.64 L6.96 11.57 L3.25 13.10 L2.96 17.76 L-2.96 17.76 L-3.25 13.10 L-6.96 11.57 L-10.47 14.64 L-14.64 10.47 L-11.57 6.96 L-13.10 3.25 L-17.76 2.96 L-17.76 -2.96 L-13.10 -3.25 L-11.57 -6.96 L-14.64 -10.47 L-10.47 -14.64 L-6.96 -11.57 L-3.25 -13.10 L-2.96 -17.76 L2.96 -17.76 L3.25 -13.10 L6.96 -11.57 L10.47 -14.64 L14.64 -10.47 L11.57 -6.96Z" fill="#f2f2f2" stroke="#f2f2f2" stroke-width="2.500" stroke-linejoin="round"/><circle r="6.300" fill="#2a2a2c"/></svg>
<svg class="ico" style="left:774px;top:600px" width="89" height="90" viewBox="0 0 89 90">
<path d="M16 0h57a15 15 0 0115 15v75H0V16A16 16 0 0116 0z" fill="#22b57f"/>
<path d="M42 0h31a15 15 0 0115 15v10H42z" fill="#ef4f70"/>
<path d="M15 8h66a7 7 0 017 7v75H11V12a4 4 0 014-4z" fill="#fff"/>
<path d="M15 8h66a7 7 0 017 7v3H11v-6a4 4 0 014-4z" fill="#3c4c9f"/>
<circle cx="18" cy="13" r="2" fill="#f06a9a"/><circle cx="24" cy="13" r="2" fill="#f7c948"/>
<rect x="31" y="10.500" width="43" height="5" rx="2.500" fill="#fff"/><rect x="77" y="10.500" width="7" height="5" rx="1.500" fill="#dfe6ff"/>
<rect x="18.500" y="25.500" width="65" height="22.500" rx="3" fill="#1a73e8"/>
<circle cx="27.500" cy="35" r="10" fill="#f8b62c"/>
<path d="M18.500 90V61a4 4 0 014-4h20a4 4 0 014 4v29z" fill="#2fc4b2"/>
<rect x="54" y="58.500" width="28" height="5" rx="1" fill="#d9dbe0"/><rect x="54" y="68" width="21" height="5" rx="1" fill="#d9dbe0"/><rect x="54" y="77.500" width="17" height="5" rx="1" fill="#d9dbe0"/>
</svg>
<div id="wmT" class="t">睿思下载网</div>
<div id="wmU" class="t">www.cdgthk.com</div>

</div>
</body>
</html>
